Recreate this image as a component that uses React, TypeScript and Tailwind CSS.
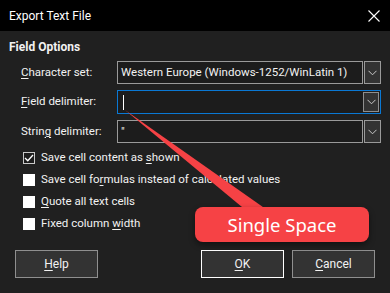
import React from 'react';

const font = { fontFamily: 'Roboto, "Noto Sans", sans-serif' };

function U({ children }: { children: React.ReactNode }) {
  return <span className="underline underline-offset-2 decoration-1">{children}</span>;
}

function Chevron() {
  return (
    <svg width="9" height="6" viewBox="0 0 9 6" fill="none">
      <path d="M0.5 0.8 L4.5 4.8 L8.5 0.8" stroke="#c8c8c8" strokeWidth="1" />
    </svg>
  );
}

function Combo({ value, focused }: { value: React.ReactNode; focused?: boolean }) {
  if (focused) {
    return (
      <div className="flex h-[24px] w-[264px] border border-[#0a78d4] bg-[#1c1c1c]">
        <div className="flex flex-1 items-center pl-[5px]">{value}</div>
        <div className="m-[1px] flex w-[16px] items-center justify-center border border-[#8f8f8f] bg-[#333333]">
          <Chevron />
        </div>
      </div>
    );
  }
  return (
    <div className="flex h-[23px] w-[264px] gap-[1px]">
      <div className="flex flex-1 items-center whitespace-nowrap border border-[#9a9a9a] bg-[#1c1c1c] pl-[3px]">{value}</div>
      <div className="flex w-[17px] items-center justify-center border border-[#9a9a9a] bg-[#333333]">
        <Chevron />
      </div>
    </div>
  );
}

function Check({ checked, children }: { checked?: boolean; children: React.ReactNode }) {
  return (
    <div className="flex h-[22px] items-center pl-[14px]">
      {checked ? (
        <div className="flex h-[12px] w-[12px] items-center justify-center border border-[#c8c8c8] bg-[#1c1c1c]">
          <svg width="10" height="8" viewBox="0 0 10 8" fill="none">
            <path d="M1 4 L3.8 6.8 L9 1" stroke="#ffffff" strokeWidth="1.3" />
          </svg>
        </div>
      ) : (
        <div className="h-[12px] w-[12px] bg-white" />
      )}
      <span className="ml-[6px] whitespace-nowrap">{children}</span>
    </div>
  );
}

export default function App() {
  return (
    <div className="relative h-[293px] w-[390px] overflow-hidden bg-[#202020] text-[11.5px] text-[#f2f2f2]" style={font}>
      <div className="flex h-[31px] items-center justify-between bg-black pl-[9px] pr-[10px]">
        <span className="text-[12px] text-white">Export Text File</span>
        <svg width="12" height="12" viewBox="0 0 12 12">
          <path d="M0.5 0.5 L11.5 11.5 M11.5 0.5 L0.5 11.5" stroke="#ffffff" strokeWidth="1.1" />
        </svg>
      </div>

      <div className="flex flex-col px-[9px] pt-[8px]">
        <div className="h-[16px] text-[12px] leading-[16px] font-bold">Field Options</div>

        <div className="mt-[6px] flex flex-col gap-[6px] pl-[12px]">
          <div className="flex items-center">
            <span className="w-[96px]"><U>C</U>haracter set:</span>
            <Combo value="Western Europe (Windows-1252/WinLatin 1)" />
          </div>
          <div className="flex items-center">
            <span className="w-[96px]"><U>F</U>ield delimiter:</span>
            <Combo focused value={<div className="h-[15px] w-[1px] bg-white" />} />
          </div>
          <div className="flex items-center">
            <span className="w-[96px]">Strin<U>g</U> delimiter:</span>
            <Combo value={'"'} />
          </div>
        </div>

        <div className="mt-[4px] flex flex-col">
          <Check checked>Save cell content as <U>s</U>hown</Check>
          <Check>Save cell fo<U>r</U>mulas instead of calculated values</Check>
          <Check><U>Q</U>uote all text cells</Check>
          <Check>Fixed column <U>w</U>idth</Check>
        </div>

        <div className="mt-[15px] flex items-center px-[6px] text-[12px]">
          <button className="h-[28px] w-[83px] border border-[#8f8f8f] bg-[#333333]"><U>H</U>elp</button>
          <div className="flex-1" />
          <button className="h-[28px] w-[83px] border border-white bg-[#333333]"><U>O</U>K</button>
          <button className="ml-[8px] h-[28px] w-[83px] border border-[#8f8f8f] bg-[#333333]"><U>C</U>ancel</button>
        </div>
      </div>

      <svg className="pointer-events-none absolute left-0 top-0" width="390" height="293">
        <polygon points="125,110 248,212 270,212" fill="#f64245" />
      </svg>
      <div
        className="absolute left-[195px] top-[207px] flex h-[35px] w-[174px] items-center justify-center rounded-[8px] bg-[#f64245] text-[18.5px] text-white shadow-[0_3px_6px_rgba(0,0,0,0.45)]"
        style={{ fontFamily: '"Noto Sans", sans-serif' }}
      >
        Single Space
      </div>
    </div>
  );
}
